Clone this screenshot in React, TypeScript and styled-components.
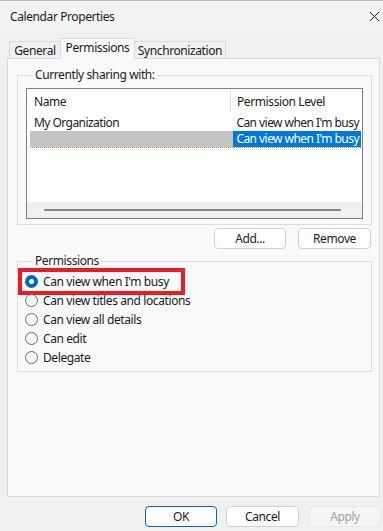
import * as React from "react";
import styled, { createGlobalStyle, css } from "styled-components";

const GlobalStyle = createGlobalStyle`
  html, body {
    margin: 0;
    padding: 0;
    background: #f0f0f0;
  }
  body {
    font-family: "Noto Sans", "Open Sans", sans-serif;
    font-size: 12px;
    letter-spacing: -0.4px;
    color: #1b1b1b;
  }
`;

const Window = styled.div`
  width: 383px;
  height: 531px;
  box-sizing: border-box;
  border-top: 1px solid #b8b8b8;
  background: #f0f0f0;
  display: flex;
  flex-direction: column;
`;

const TitleBar = styled.div`
  height: 31px;
  display: flex;
  align-items: center;
  justify-content: space-between;
  padding: 0 3px 0 10px;
  background: #f3f3f3;
`;

const Title = styled.div`
  font-size: 12px;
`;

const CloseIcon = () => (
  <svg width="11" height="11" viewBox="0 0 11 11">
    <path d="M1 1 L10 10 M10 1 L1 10" stroke="#222" strokeWidth="1" />
  </svg>
);

const Tabs = styled.div`
  display: flex;
  align-items: flex-end;
  margin: 6px 0 0 9px;
  height: 20px;
  position: relative;
  z-index: 1;
`;

const Tab = styled.div<{ $active?: boolean; $width: number }>`
  box-sizing: border-box;
  width: ${(p) => p.$width}px;
  height: 17px;
  border: 1px solid #d9d9d9;
  border-bottom: none;
  background: #f0f0f0;
  display: flex;
  align-items: center;
  justify-content: center;
  margin-right: -1px;
  ${(p) =>
    p.$active &&
    css`
      height: 21px;
      margin-bottom: -1px;
      padding-bottom: 3px;
      background: #f9f9f9;
    `}
`;

const Panel = styled.div`
  box-sizing: border-box;
  margin: 0 3px 0 7px;
  height: 439px;
  border: 1px solid #d9d9d9;
  background: #f9f9f9;
  padding: 9px 7px 0 9px;
  display: flex;
  flex-direction: column;
`;

const Group = styled.fieldset`
  margin: 0;
  padding: 6px 8px 5px 8px;
  border: 1px solid #dcdcdc;
  min-width: 0;
`;

const Legend = styled.legend`
  padding: 0 2px;
  margin-left: 7px;
  line-height: 14px;
`;

const List = styled.div`
  height: 129px;
  border: 1px solid #7f7f88;
  background: #ffffff;
  display: flex;
  flex-direction: column;
`;

const HeaderRow = styled.div`
  display: flex;
  height: 24px;
  align-items: stretch;
  margin-left: 3px;
  margin-bottom: 2px;
`;

const HeaderCell = styled.div<{ $width: number; $divider?: boolean }>`
  width: ${(p) => p.$width}px;
  box-sizing: border-box;
  display: flex;
  align-items: center;
  padding-left: ${(p) => (p.$divider ? 6 : 4)}px;
  border-left: ${(p) => (p.$divider ? "1px solid #e5e5e5" : "none")};
  margin-top: 1px;
`;

const Row = styled.div<{ $selected?: boolean }>`
  display: flex;
  height: 16px;
  margin: 0 1px 0 3px;
  align-items: flex-start;
  ${(p) =>
    p.$selected &&
    css`
      border-bottom: 1px dotted #c98a3a;
    `}
`;

const Cell = styled.div<{ $width: number; $bg?: string; $fg?: string; $pad?: number }>`
  width: ${(p) => p.$width}px;
  height: 16px;
  line-height: 16px;
  box-sizing: border-box;
  padding-left: ${(p) => p.$pad ?? 4}px;
  letter-spacing: -0.55px;
  white-space: nowrap;
  overflow: hidden;
  background: ${(p) => p.$bg || "transparent"};
  color: ${(p) => p.$fg || "inherit"};
`;

const ScrollArea = styled.div`
  margin-top: auto;
  height: 16px;
  background: #f0f0f0;
  display: flex;
  align-items: center;
  padding: 0 21px 0 17px;
`;

const ScrollThumb = styled.div`
  flex: 1;
  height: 2px;
  background: #858585;
  border-radius: 1px;
`;

const ButtonRow = styled.div<{ $gap: number }>`
  display: flex;
  justify-content: flex-end;
  gap: ${(p) => p.$gap}px;
`;

const Button = styled.button<{ $primary?: boolean; $width?: number }>`
  box-sizing: border-box;
  width: ${(p) => p.$width || 72}px;
  height: 21px;
  padding: 0;
  font-family: inherit;
  font-size: 12px;
  letter-spacing: inherit;
  color: #1b1b1b;
  background: #fdfdfd;
  border: 1px solid #d0d0d0;
  border-radius: 4px;
  ${(p) =>
    p.$primary &&
    css`
      border-color: #0067c0;
    `}
  &:disabled {
    color: #a2a2a2;
    background: #f5f5f5;
    border-color: #e8e8e8;
  }
`;

const Options = styled.div`
  display: flex;
  flex-direction: column;
  padding-top: 4px;
  margin-left: -1px;
`;

const Option = styled.label<{ $highlighted?: boolean }>`
  display: flex;
  align-self: flex-start;
  align-items: center;
  gap: 5px;
  height: 19px;
  padding: 0 13px 0 0;
  ${(p) =>
    p.$highlighted &&
    css`
      margin-left: -3px;
      padding-left: 3px;
      padding-right: 12px;
      outline: 4px solid #e81c24;
      outline-offset: 0px;
    `}
`;

const Radio = styled.span<{ $checked?: boolean }>`
  box-sizing: border-box;
  width: 13px;
  height: 13px;
  border-radius: 50%;
  border: 1px solid #6e6e6e;
  background: #f6f6f6;
  display: inline-flex;
  align-items: center;
  justify-content: center;
  ${(p) =>
    p.$checked &&
    css`
      border: none;
      background: #0067c0;
      &::after {
        content: "";
        width: 5px;
        height: 5px;
        border-radius: 50%;
        background: #ffffff;
      }
    `}
`;

const Footer = styled.div`
  display: flex;
  justify-content: flex-end;
  padding: 9px 2px 0 0;
`;

const permissionOptions = [
  "Can view when I'm busy",
  "Can view titles and locations",
  "Can view all details",
  "Can edit",
  "Delegate",
];

export default function App() {
  return (
    <Window>
      <GlobalStyle />
      <TitleBar>
        <Title>Calendar Properties</Title>
        <CloseIcon />
      </TitleBar>
      <Tabs>
        <Tab $width={52}>General</Tab>
        <Tab $width={75} $active>
          Permissions
        </Tab>
        <Tab $width={92}>Synchronization</Tab>
      </Tabs>
      <Panel>
        <Group>
          <Legend>Currently sharing with:</Legend>
          <List>
            <HeaderRow>
              <HeaderCell $width={200}>Name</HeaderCell>
              <HeaderCell $width={132} $divider>
                Permission Level
              </HeaderCell>
            </HeaderRow>
            <Row>
              <Cell $width={204}>My Organization</Cell>
              <Cell $width={128} $pad={3}>
                Can view when I'm busy
              </Cell>
            </Row>
            <Row $selected>
              <Cell $width={204} $bg="#c4c4c4" />
              <Cell $width={128} $pad={3} $bg="#0078d7" $fg="#ffffff">
                Can view when I'm busy
              </Cell>
            </Row>
            <ScrollArea>
              <ScrollThumb />
            </ScrollArea>
          </List>
        </Group>
        <ButtonRow $gap={12} style={{ marginTop: 3, marginRight: 1 }}>
          <Button>Add...</Button>
          <Button $width={73}>Remove</Button>
        </ButtonRow>
        <Group style={{ marginTop: 5, paddingTop: 0, paddingBottom: 4 }}>
          <Legend>Permissions</Legend>
          <Options>
            {permissionOptions.map((label, i) => (
              <Option key={label} $highlighted={i === 0}>
                <Radio $checked={i === 0} />
                {label}
              </Option>
            ))}
          </Options>
        </Group>
      </Panel>
      <Footer>
        <ButtonRow $gap={9}>
          <Button $primary>OK</Button>
          <Button $width={73} style={{ marginRight: 1 }}>
            Cancel
          </Button>
          <Button disabled>Apply</Button>
        </ButtonRow>
      </Footer>
    </Window>
  );
}
